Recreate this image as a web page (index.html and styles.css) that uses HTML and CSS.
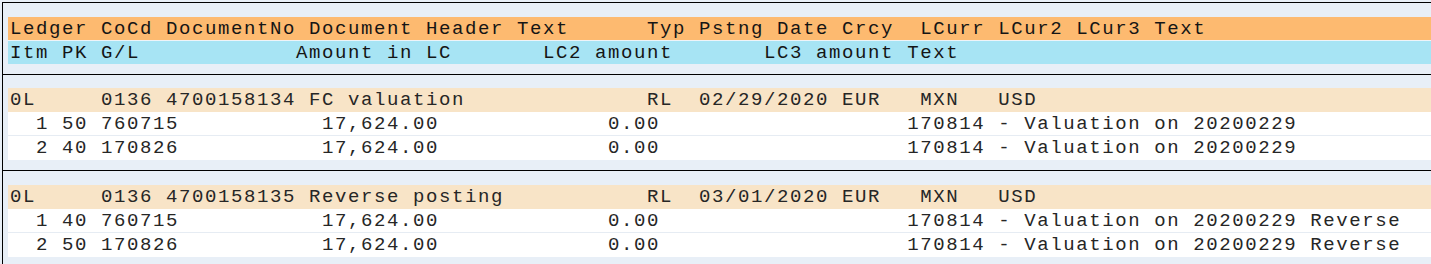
FILE: index.html
```html
<!DOCTYPE html>
<html lang="en">
<head>
<meta charset="utf-8">
<title>Ledger document list</title>
<link rel="stylesheet" href="styles.css">
</head>
<body>
<div class="list">
  <section class="block block-head">
    <div class="row row-h1">Ledger CoCd DocumentNo Document Header Text      Typ Pstng Date Crcy  LCurr LCur2 LCur3 Text</div>
    <div class="row row-h2">Itm PK G/L            Amount in LC       LC2 amount       LC3 amount Text</div>
  </section>
  <section class="block block-doc">
    <div class="row row-doc">0L     0136 4700158134 FC valuation              RL  02/29/2020 EUR   MXN   USD</div>
    <div class="row row-item row-sep">  1 50 760715           17,624.00             0.00                   170814 - Valuation on 20200229</div>
    <div class="row row-item">  2 40 170826           17,624.00             0.00                   170814 - Valuation on 20200229</div>
  </section>
  <section class="block block-doc block-last">
    <div class="row row-doc">0L     0136 4700158135 Reverse posting           RL  03/01/2020 EUR   MXN   USD</div>
    <div class="row row-item row-sep">  1 40 760715           17,624.00             0.00                   170814 - Valuation on 20200229 Reverse</div>
    <div class="row row-item">  2 50 170826           17,624.00             0.00                   170814 - Valuation on 20200229 Reverse</div>
  </section>
</div>
</body>
</html>
```
FILE: styles.css
```css
html, body {
  margin: 0;
  padding: 0;
  background: #e8eff7;
  overflow: hidden;
}

.list {
  margin: 2px 0 0 2px;
  border-left: 1px solid #000;
  height: 262px;
  box-sizing: border-box;
  display: flex;
  flex-direction: column;
}

.block {
  border-top: 1px solid #000;
  padding-left: 5px;
  display: flex;
  flex-direction: column;
}

.block-head {
  padding-top: 14px;
  padding-bottom: 10px;
}

.block-doc {
  padding-top: 13px;
  padding-bottom: 10px;
}

.block-last {
  padding-top: 14px;
}

.row {
  height: 24px;
  box-sizing: border-box;
  padding-left: 2px;
  padding-top: 1px;
  line-height: 23px;
  white-space: pre;
  font-family: "Courier New", "Nimbus Mono PS", "Nimbus Mono L", "FreeMono", "Liberation Mono", monospace;
  font-size: 19px;
  letter-spacing: 1.6px;
  color: #262626;
  overflow: hidden;
}

.row-h1 {
  background: #fdba70;
  height: 24px;
  line-height: 22px;
  border-bottom: 1px solid #eef4f9;
  color: #151515;
}

.row-h2 {
  background: #a7e4f4;
  height: 23px;
  line-height: 22px;
  color: #151515;
}

.row-doc {
  background: #f8e4c7;
}

.row-item {
  background: #ffffff;
}

.row-sep {
  border-bottom: 1px solid #e6ecf3;
  line-height: 22px;
}
```
